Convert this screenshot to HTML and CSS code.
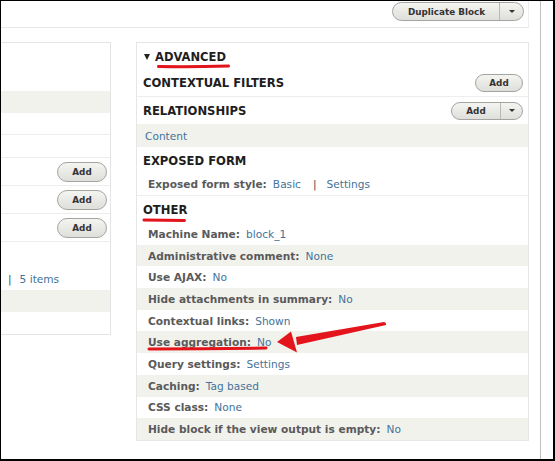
FILE: index.html
```html
<!DOCTYPE html>
<html>
<head>
<meta charset="utf-8">
<link rel="stylesheet" href="styles.css">
</head>
<body>
<div class="frame">
  <div class="page">
    <div class="topbar">
      <div class="split-btn dup">
        <span class="btn-main">Duplicate Block</span>
        <span class="btn-arrow"><i class="caret"></i></span>
      </div>
    </div>
    <div class="columns">
      <div class="col-left">
        <div class="l-head"></div>
        <div class="l-row gray"></div>
        <div class="l-row lined short"></div>
        <div class="l-row lined"></div>
        <div class="l-bucket"><span class="btn add-l">Add</span></div>
        <div class="l-bucket"><span class="btn add-l">Add</span></div>
        <div class="l-bucket"><span class="btn add-l">Add</span></div>
        <div class="l-pager"><span class="sep">|</span><span class="val">5 items</span></div>
        <div class="l-row gray"></div>
        <div class="l-row"></div>
      </div>
      <div class="col-right">
        <div class="title"><i class="tri"></i><span>ADVANCED</span></div>
        <div class="bucket-head lined h27">
          <span class="h">CONTEXTUAL FILTERS</span>
          <span class="btn add-r">Add</span>
        </div>
        <div class="bucket-head h27">
          <span class="h">RELATIONSHIPS</span>
          <span class="split-btn rel">
            <span class="btn-main">Add</span>
            <span class="btn-arrow"><i class="caret"></i></span>
          </span>
        </div>
        <div class="row gray content-row"><span class="val">Content</span></div>
        <div class="bucket-head h26"><span class="h">EXPOSED FORM</span></div>
        <div class="row lined tall"><span class="lbl">Exposed form style:</span><span class="val">Basic</span><span class="pipe">|</span><span class="val">Settings</span></div>
        <div class="bucket-head h27"><span class="h">OTHER</span></div>
        <div class="row"><span class="lbl">Machine Name:</span><span class="val">block_1</span></div>
        <div class="row gray"><span class="lbl">Administrative comment:</span><span class="val">None</span></div>
        <div class="row"><span class="lbl">Use AJAX:</span><span class="val">No</span></div>
        <div class="row gray"><span class="lbl">Hide attachments in summary:</span><span class="val">No</span></div>
        <div class="row"><span class="lbl">Contextual links:</span><span class="val">Shown</span></div>
        <div class="row gray"><span class="lbl">Use aggregation:</span><span class="val">No</span></div>
        <div class="row"><span class="lbl">Query settings:</span><span class="val">Settings</span></div>
        <div class="row gray"><span class="lbl">Caching:</span><span class="val">Tag based</span></div>
        <div class="row"><span class="lbl">CSS class:</span><span class="val">None</span></div>
        <div class="row gray"><span class="lbl">Hide block if the view output is empty:</span><span class="val">No</span></div>
      </div>
    </div>
  </div>
  <div class="rail"></div>
</div>
<svg class="marks" width="555" height="461" viewBox="0 0 555 461">
  <g stroke="#e3141b" stroke-width="3" stroke-linecap="round" fill="none">
    <path d="M158.5 66.5 Q193 67 228.5 66"/>
    <path d="M144 220 L184.5 220.5"/>
    <path d="M149 349 Q208 348.8 266 348"/>
  </g>
  <path fill="#e3141b" d="M296 337 L384 322 Q386.5 322.5 386 325 L297 345 Z"/>
  <path fill="#e3141b" d="M277 342 L291 331.5 L297 352.5 Z"/>
</svg>
</body>
</html>
```
FILE: styles.css
```css
body {
  margin: 0;
  background: #fff;
  font-family: "DejaVu Sans", "Noto Sans", sans-serif;
  color: #222;
}

.frame {
  width: 555px;
  height: 461px;
  box-sizing: border-box;
  border-style: solid;
  border-color: #000;
  border-width: 1px 2px 2px 1px;
  display: flex;
  overflow: hidden;
}

.page {
  width: 539px;
  flex: none;
}

.rail {
  flex: 1;
  border-left: 1px solid #c3bfba;
}

.topbar {
  width: 528px;
  height: 27px;
  box-sizing: border-box;
  border-right: 1px solid #ededed;
  border-bottom: 1px solid #e8e8e8;
  display: flex;
  justify-content: flex-end;
  align-items: flex-start;
  padding: 1px 4px 0 0;
}

/* buttons */
.btn,
.split-btn {
  box-sizing: border-box;
  border: 1px solid #a4a4a0;
  border-radius: 10px;
  background: linear-gradient(#f4f4f1, #dededa);
  font-weight: bold;
  font-size: 8.8px;
  color: #333;
  display: inline-flex;
  align-items: center;
  justify-content: center;
}

.split-btn {
  justify-content: flex-start;
}

.btn-main {
  height: 100%;
  display: flex;
  align-items: center;
  justify-content: center;
  box-sizing: border-box;
  border-right: 1px solid #b8b8b4;
}

.btn-arrow {
  flex: 1;
  height: 100%;
  display: flex;
  align-items: center;
  justify-content: center;
}

.caret {
  width: 0;
  height: 0;
  border-left: 3px solid transparent;
  border-right: 3px solid transparent;
  border-top: 3px solid #333;
}

.dup {
  width: 132px;
  height: 19px;
}

.dup .btn-main {
  width: 107px;
  padding-left: 1px;
}

.rel {
  width: 72px;
  height: 18px;
}

.rel .btn-main {
  width: 49px;
}

.add-l {
  width: 50px;
  height: 20px;
}

.add-r {
  width: 48px;
  height: 18px;
}

/* columns */
.columns {
  display: flex;
  align-items: flex-start;
  margin-top: 14px;
}

.col-left {
  width: 110px;
  flex: none;
  box-sizing: border-box;
  border: 1px solid #e4e4e4;
  border-left: none;
}

.l-head {
  height: 48px;
}

.l-row {
  height: 22px;
}

.l-row.short {
  height: 21px;
}

.gray {
  background: #f2f2ed;
}

.lined {
  border-bottom: 1px solid #ededed;
}

.l-bucket {
  height: 27px;
  border-bottom: 1px solid #ededed;
  display: flex;
  align-items: center;
  justify-content: flex-end;
  padding-right: 3px;
}

.l-pager {
  height: 48px;
  box-sizing: border-box;
  display: flex;
  align-items: flex-end;
  padding: 0 0 4px 7px;
  font-size: 10.6px;
  line-height: 14px;
}

.sep {
  color: #444;
  margin-right: 8px;
}

.col-right {
  width: 393px;
  flex: none;
  margin-left: 25px;
  box-sizing: border-box;
  border: 1px solid #e6e6e6;
}

.title {
  height: 26px;
  display: flex;
  align-items: center;
  padding: 1px 0 0 7px;
  box-sizing: border-box;
  font-weight: bold;
  font-size: 11.5px;
  color: #1e1e1e;
}

.tri {
  width: 0;
  height: 0;
  border-left: 3.5px solid transparent;
  border-right: 3.5px solid transparent;
  border-top: 6px solid #222;
  margin-right: 5px;
}

.bucket-head {
  display: flex;
  align-items: center;
  justify-content: space-between;
  padding: 0 5px 0 6px;
  box-sizing: content-box;
}

.h27 {
  height: 27px;
}

.h26 {
  height: 26px;
}

.h {
  font-weight: bold;
  font-size: 11.6px;
  color: #1e1e1e;
  padding-top: 1px;
}

.row {
  height: 21.7px;
  display: flex;
  align-items: center;
  padding-left: 11px;
  font-size: 10.6px;
  white-space: nowrap;
}

.row.tall {
  height: 22px;
}

.content-row {
  height: 23px;
  padding-left: 8px;
}

.lbl {
  font-weight: bold;
  color: #5a5a5a;
  margin-right: 6px;
}

.val {
  color: #43729a;
}

.pipe {
  color: #444;
  margin: 0 10px 0 12px;
}

.marks {
  position: absolute;
  top: 0;
  left: 0;
  pointer-events: none;
}
```
